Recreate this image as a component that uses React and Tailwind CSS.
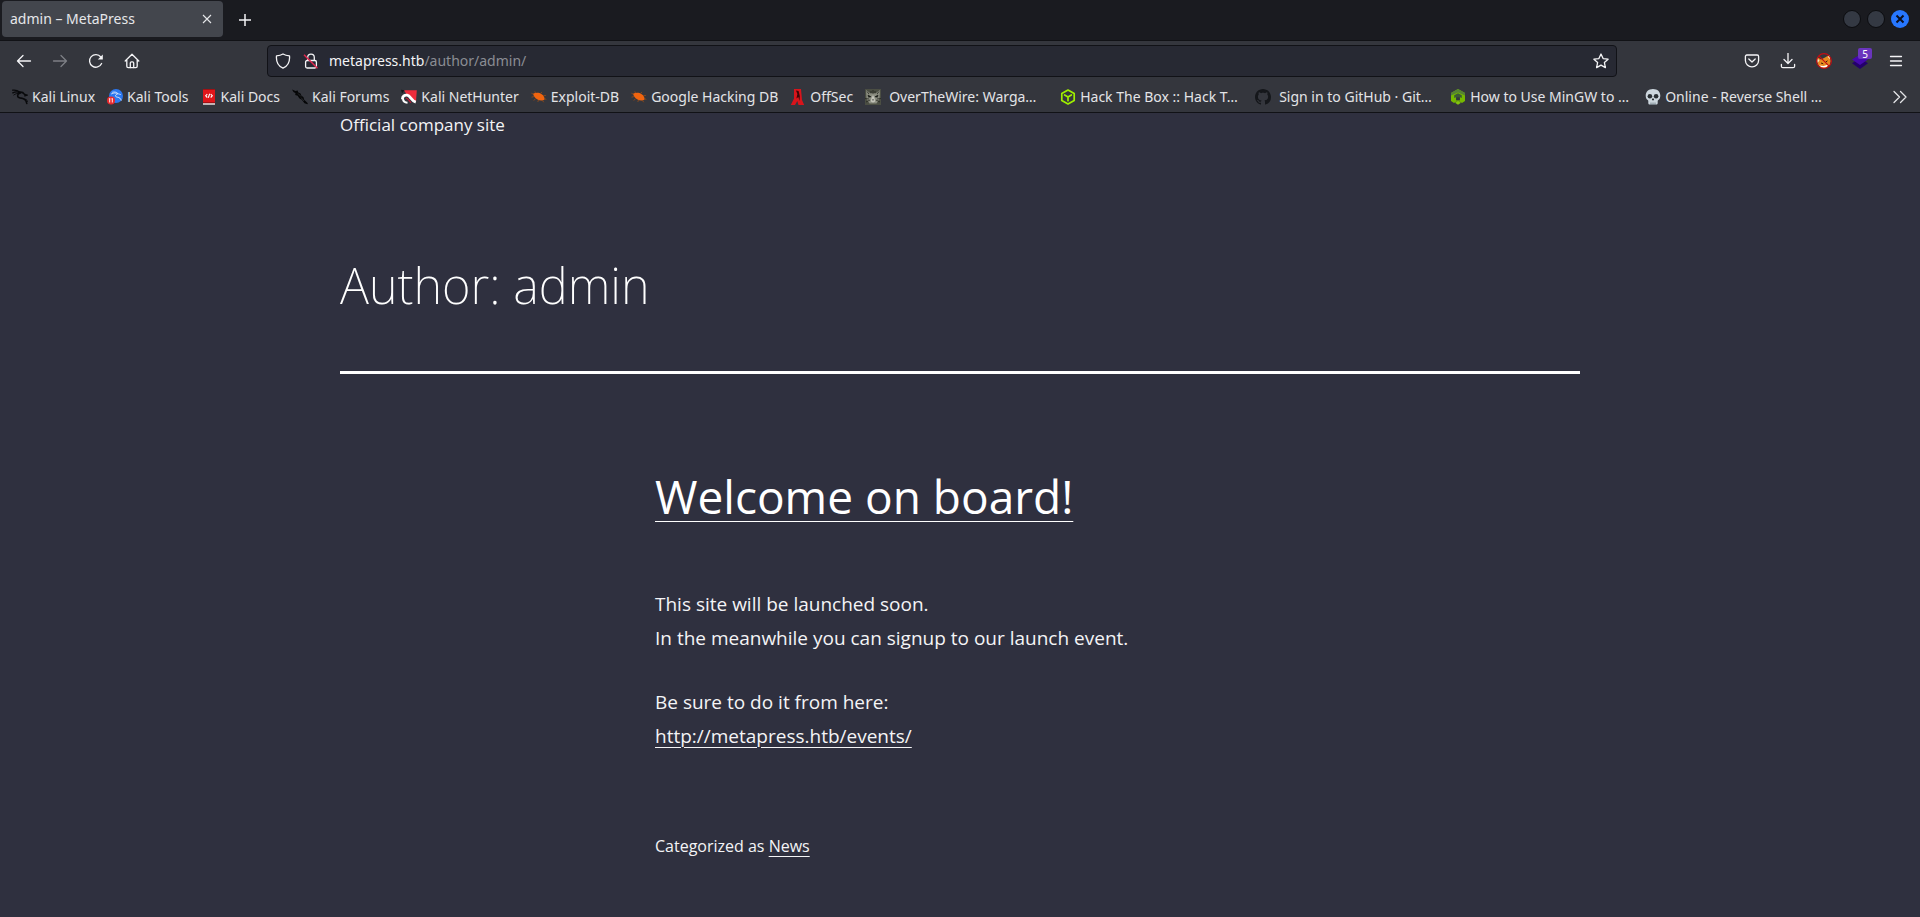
import React from "react";

const UI_FONT = "font-['Noto_Sans','Open_Sans',sans-serif]";

function Stroke({ children, size = 16, className = "" }) {
  return (
    <svg
      width={size}
      height={size}
      viewBox="0 0 16 16"
      fill="none"
      stroke="currentColor"
      strokeWidth="1.3"
      strokeLinecap="round"
      strokeLinejoin="round"
      className={`shrink-0 ${className}`}
      aria-hidden="true"
    >
      {children}
    </svg>
  );
}

function Favicon({ children }) {
  return (
    <svg width="16" height="16" viewBox="0 0 16 16" className="shrink-0" aria-hidden="true">
      {children}
    </svg>
  );
}

const KaliLinuxIcon = () => (
  <Favicon>
    <g fill="none" stroke="#08090b" strokeLinecap="round">
      <path d="M.6 1.2C3 .8 5.500 1.300 7.600 3" strokeWidth="1.2" />
      <path d="M.8 3.900C3 2.600 5.500 2.500 8 3.600" strokeWidth="1.300" />
      <path d="M1.800 6C3.500 4.600 6 4 8.400 4.400" strokeWidth=".9" />
      <path d="M7.500 3.200c2.200-.3 4 .6 4.800 2l2.400.9-1.900.7" strokeWidth="1.500" />
      <path d="M7.600 4.200C5 5.200 4.800 8.300 8 8.900c4 .6 6.200 1.500 6.800 5.600" strokeWidth="1.600" />
      <path d="M12 10c1.800.1 3.200.8 3.600 2.400" strokeWidth="1" />
    </g>
  </Favicon>
);

const KaliToolsIcon = () => (
  <Favicon>
    <circle cx="9" cy="7" r="7" fill="#2b78f0" />
    <g fill="none" stroke="#e8f1ff" strokeLinecap="round">
      <path d="M4.500 4.800c2.200-1.200 4.300-1.200 6.200 0" strokeWidth=".8" />
      <path d="M5.500 3.200c2-.6 4-.3 5.500 1.500l2.500.8" strokeWidth=".7" />
      <path d="M10 5.200c-2.400.9-1.800 2.700.4 3 2 .3 3.300 1.100 3.800 3" strokeWidth=".9" />
    </g>
    <circle cx="4" cy="11.600" r="4" fill="#ea2a2e" />
    <path d="M2.700 9.800v3.700M1.900 9.800h1.400M5.300 9.800v3.700M4.500 9.800h1.400" stroke="#fff" strokeWidth=".9" fill="none" />
  </Favicon>
);

const KaliDocsIcon = () => (
  <Favicon>
    <path d="M2 0h12v14.500H2z" fill="#e0161b" />
    <path d="M2 0h12v1H2zM2 13h12v1H2z" fill="#a11114" />
    <path d="M2 14.200h12V15.800H2z" fill="#ddd5d5" />
    <path d="M6.300 5 4.700 6.800l1.600 1.700M9.700 5l1.600 1.800-1.600 1.700M8.700 4.800 7.300 8.800" stroke="#fff" strokeWidth="1.100" fill="none" />
  </Favicon>
);

const KaliForumsIcon = () => (
  <Favicon>
    <path
      d="M0 .5 3.500 2l2.200-.4.4 1.700 2.400 1.200.8 2 2.200 1.800.7 2.500 3.600 3.500-.3 1-3-1-2.700-3.600-2.600-1.500-1.500-2.400L3.200 6l.3-1.800L1.500 3z"
      fill="#050607"
    />
    <path d="m6 4.500 3 3M9 8.500l3 3.500" stroke="#3a3c42" strokeWidth=".6" />
  </Favicon>
);

const NetHunterIcon = () => (
  <Favicon>
    <path d="M3 1.200H15.800L15 12.500 9 9 5 4.500z" fill="#ee2c3c" />
    <path d="M0 .8 3.500 1.200 1 4.500z" fill="#15161a" />
    <path d="M1.400 10.200C1.400 7.200 3.600 5.800 6.200 6.200c3.400.6 4.300 5.800 8.600 7" fill="none" stroke="#fff" strokeWidth="2.800" />
    <path d="M2 9.500c0 2.500 1.300 4 4.500 4.200" fill="none" stroke="#fff" strokeWidth="2" />
    <path d="M4.800 9.200c1.800.2 3.400 1.800 5 4.600" fill="none" stroke="#c01c36" strokeWidth="1.300" />
  </Favicon>
);

const BugIcon = () => (
  <Favicon>
    <path
      d="M2 4.800C3.500 3.800 5.300 3.500 7.400 3.700c2.400.4 4.600 2 5.600 4 .6 1.300.7 2.500.2 3.400-2.200.8-5 .5-7.200-.8C4.100 9.200 2.700 7.200 2 4.800z"
      fill="#f0640f"
    />
    <path
      d="M4.500 4 3.800 2.400M2.300 5.200.4 4.200M9.500 4.400l1.600-1.300M12.300 6.800l2.600-.4M2.900 7.600.6 8.200M4.400 9.800l-1.600 1.800M7.500 11 6.800 13M13.300 9.600l2 .8M11.300 11.200l1.400 2"
      stroke="#a9500f"
      strokeWidth=".7"
    />
  </Favicon>
);

const OffSecIcon = () => (
  <Favicon>
    <path d="M4 0h7l1 11 2.200 5H8.500L7.300 12 5 16H.8L4 9.500z" fill="#d8141b" />
    <path d="M6 1.500 7.400 5 6.400 9.500 8.400 8l1.100 4 .3-5L8.600 2z" fill="#3b0607" />
  </Favicon>
);

const CatIcon = () => (
  <Favicon>
    <path d="M0 0h16v16H0z" fill="#4b4e43" />
    <path d="M1 1 5 4h6l4-3-.5 9-3 4.500h-7L1.500 10z" fill="#8b8d80" />
    <path d="M2 2.500 4 5M14 2.500 12 5M8 1v4M6 2v2.500M10 2v2.500M0 9.500l4 .5M16 9.500l-4 .5M1 13l4-2M15 13l-4-2" stroke="#24261f" strokeWidth=".8" />
    <path d="M6.500 9 8 6l1.500 3 .8 3.500-2.300 1-2.300-1z" fill="#c3c4b9" />
    <path d="m3 6 3 1.800-2.400.4zM13 6l-3 1.800 2.400.4z" fill="#1a1c17" stroke="#1a1c17" strokeWidth=".6" />
    <path d="M7 10.500h2L8 11.800z" fill="#23241f" />
  </Favicon>
);

const BoxIcon = () => (
  <Favicon>
    <path
      d="M8 1 14.200 4.500v7L8 15l-6.200-3.500v-7zM4.600 5.900 8 7.900l3.400-2M8 7.900v3.800"
      fill="none"
      stroke="#9fef00"
      strokeWidth="1.700"
      strokeLinejoin="round"
      strokeLinecap="round"
    />
  </Favicon>
);

const GitHubIcon = () => (
  <Favicon>
    <path
      fill="#15171b"
      d="M8 0C3.580 0 0 3.580 0 8c0 3.540 2.290 6.530 5.470 7.590.4.070.550-.170.550-.380 0-.190-.010-.820-.010-1.490-2.010.370-2.530-.490-2.690-.940-.090-.230-.480-.940-.820-1.130-.280-.150-.680-.520-.010-.530.630-.010 1.080.580 1.230.820.720 1.210 1.870.870 2.330.660.070-.520.280-.870.510-1.070-1.780-.2-3.640-.890-3.640-3.950 0-.870.310-1.590.820-2.150-.080-.2-.360-1.020.080-2.120 0 0 .670-.210 2.200.820.640-.180 1.320-.270 2-.270s1.360.090 2 .270c1.530-1.040 2.200-.820 2.200-.820.440 1.100.160 1.920.080 2.120.510.560.820 1.270.820 2.150 0 3.070-1.870 3.750-3.650 3.950.290.250.540.730.540 1.480 0 1.070-.010 1.930-.010 2.200 0 .210.150.460.550.380A8.010 8.010 0 0 0 16 8c0-4.420-3.580-8-8-8z"
    />
  </Favicon>
);

const HexIcon = () => (
  <Favicon>
    <path d="M8 0 15 4v8l-3 2-2-1.200H6L4 14l-3-2V4z" fill="#76b900" />
    <path d="M8 0 15 4v2.500L8 3.500 1 6.500V4z" fill="#558233" />
    <path d="M8 4.200 11.800 6.300v2.600L10 8.200v3H6v-3l-1.800.7V6.300z" fill="#3b5a35" />
    <path d="M6.300 8.400h3.400v2.800H6.300z" fill="#34363d" />
    <path d="M5 13.700 8 12l3 1.700L8 15.800z" fill="#83c40f" />
  </Favicon>
);

const SkullIcon = () => (
  <Favicon>
    <path
      d="M8 0c4.500 0 7.300 2.800 7.300 6.600 0 2.200-.6 3.700-2 4.500-.5.300-.6.800-.6 1.500v1.300c0 1-.7 1.700-1.600 1.700H4.900c-.9 0-1.600-.7-1.600-1.700v-1.300c0-.7-.1-1.200-.6-1.500C1.300 10.300.7 8.800.7 6.600.7 2.800 3.500 0 8 0z"
      fill="#ccd6dd"
    />
    <circle cx="4.900" cy="7.300" r="2.300" fill="#292f33" />
    <circle cx="11.100" cy="7.300" r="2.300" fill="#292f33" />
    <path d="M8 9.300c.7 0 1.300 1.500 1 2-.3.300-.6-.2-1-.2s-.7.500-1 .2c-.3-.5.300-2 1-2z" fill="#292f33" />
    <path d="M6 13.500V16M8 13.500V16M10 13.500V16" stroke="#66757f" strokeWidth=".8" />
  </Favicon>
);

const BOOKMARKS = [
  { title: "Kali Linux", Icon: KaliLinuxIcon },
  { title: "Kali Tools", Icon: KaliToolsIcon },
  { title: "Kali Docs", Icon: KaliDocsIcon },
  { title: "Kali Forums", Icon: KaliForumsIcon },
  { title: "Kali NetHunter", Icon: NetHunterIcon },
  { title: "Exploit-DB", Icon: BugIcon },
  { title: "Google Hacking DB", Icon: BugIcon },
  { title: "OffSec", Icon: OffSecIcon },
  { title: "OverTheWire: Warga…", Icon: CatIcon, indented: true, long: true },
  { title: "Hack The Box :: Hack T…", Icon: BoxIcon, long: true },
  { title: "Sign in to GitHub · Git…", Icon: GitHubIcon, indented: true, long: true },
  { title: "How to Use MinGW to …", Icon: HexIcon, long: true },
  { title: "Online - Reverse Shell …", Icon: SkullIcon, long: true },
];

function ToolButton({ label, disabled, children }) {
  return (
    <button
      type="button"
      aria-label={label}
      disabled={disabled}
      className="flex h-8 w-9 shrink-0 items-center justify-center text-[#f4f4f6] disabled:text-[#7d7f85]"
    >
      {children}
    </button>
  );
}

function TabBar() {
  return (
    <div className="flex h-[41px] items-start border-b border-[#111216] bg-[#1a1b20]">
      <div className="ml-[2px] mt-px flex h-9 w-[221px] items-center justify-between rounded-[4px] bg-[#43464d] pl-2 pr-[10px]">
        <span className="text-[#e6e7ea]">admin – MetaPress</span>
        <button type="button" aria-label="Close tab" className="text-[#e6e7ea]">
          <svg width="12" height="12" viewBox="0 0 12 12" stroke="currentColor" strokeWidth="1.100" aria-hidden="true">
            <path d="m2 2 8 8M10 2 2 10" />
          </svg>
        </button>
      </div>
      <button type="button" aria-label="New tab" className="ml-[14px] mt-1 flex h-8 w-4 items-center justify-center text-[#f4f4f6]">
        <svg width="14" height="14" viewBox="0 0 14 14" stroke="currentColor" strokeWidth="1.500" aria-hidden="true">
          <path d="M7 1v12M1 7h12" />
        </svg>
      </button>
      <div className="ml-auto mr-[11px] mt-[10px] flex gap-[6px]">
        <button type="button" aria-label="Minimize" className="h-[18px] w-[18px] rounded-full border border-[#0b0c0f] bg-[#343943]" />
        <button type="button" aria-label="Maximize" className="h-[18px] w-[18px] rounded-full border border-[#0b0c0f] bg-[#343943]" />
        <button type="button" aria-label="Close" className="flex h-[18px] w-[18px] items-center justify-center rounded-full bg-[#2777ff]">
          <svg width="10" height="10" viewBox="0 0 10 10" stroke="#0b1020" strokeWidth="2" aria-hidden="true">
            <path d="m1.500 1.500 7 7M8.500 1.500l-7 7" />
          </svg>
        </button>
      </div>
    </div>
  );
}

function NavBar() {
  return (
    <div className="flex h-10 items-center px-[6px]">
      <ToolButton label="Back">
        <Stroke><path d="M14.500 8H1.500M7 2.500 1.500 8 7 13.500" /></Stroke>
      </ToolButton>
      <ToolButton label="Forward" disabled>
        <Stroke><path d="M1.500 8h13M9 2.500 14.500 8 9 13.500" /></Stroke>
      </ToolButton>
      <ToolButton label="Reload">
        <Stroke>
          <path d="M13.600 10.500A6.300 6.300 0 1 1 12.800 4" />
          <path d="M14.800 1.500v5h-5z" fill="currentColor" stroke="none" />
        </Stroke>
      </ToolButton>
      <ToolButton label="Home">
        <Stroke>
          <path d="M1.200 8 8 1.300 14.800 8M2.800 7v6.300c0 .9.600 1.400 1.400 1.400h7.600c.8 0 1.400-.5 1.400-1.400V7" />
          <path d="M6.300 14.500V10c0-.7.5-1.200 1.200-1.200h1c.7 0 1.200.5 1.200 1.200v4.500" />
        </Stroke>
      </ToolButton>
      <div className="w-[117px] shrink-0" />
      <div className="flex h-8 min-w-0 flex-1 items-center rounded-[4px] border border-[#111217] bg-[#272933] px-[7px] text-[#f4f4f6]">
        <Stroke>
          <path d="M8 1c2 1.200 4.200 1.700 6.500 1.900.5 5.400-1.500 10-6.500 12.200C3 12.900 1 8.300 1.500 2.900 3.800 2.700 6 2.200 8 1z" />
        </Stroke>
        <svg width="16" height="16" viewBox="0 0 16 16" fill="none" className="ml-3 shrink-0" aria-hidden="true">
          <rect x="2.600" y="7.500" width="10.800" height="7.500" rx="1.500" stroke="#f4f4f6" strokeWidth="1.300" />
          <path d="M4.700 7.300V4.500a3.300 3.300 0 0 1 6.600 0v2.800" stroke="#f4f4f6" strokeWidth="1.300" />
          <path d="m1 1.800 13.500 13.400" stroke="#e22850" strokeWidth="1.500" />
        </svg>
        <div role="textbox" aria-label="Address" className="ml-[10px] flex-1 truncate">
          metapress.htb<span className="text-[#8b8d94]">/author/admin/</span>
        </div>
        <button type="button" aria-label="Bookmark this page">
          <Stroke>
            <path d="m8 1 2.100 4.600 5 .6-3.700 3.400 1 5L8 12.100l-4.400 2.500 1-5L.9 6.200l5-.6z" />
          </Stroke>
        </button>
      </div>
      <div className="w-[117px] shrink-0" />
      <ToolButton label="Save to Pocket">
        <Stroke>
          <path d="M2.800 2h10.400c.8 0 1.400.6 1.400 1.400v4A6.500 6.500 0 0 1 8 13.800 6.500 6.500 0 0 1 1.400 7.400v-4C1.400 2.600 2 2 2.800 2zM4.800 6 8 9l3.200-3" />
        </Stroke>
      </ToolButton>
      <ToolButton label="Downloads">
        <Stroke>
          <path d="M8 .2v10.200M4 6.500l4 4 4-4M1.400 11.500v1.700c0 .9.600 1.500 1.500 1.500h10.200c.9 0 1.500-.6 1.500-1.500v-1.700" />
        </Stroke>
      </ToolButton>
      <ToolButton label="FoxyProxy">
        <svg width="16" height="16" viewBox="0 0 16 16" aria-hidden="true">
          <path d="M1 4 5 6.500 9 4.500 13.200 2l1.500 6-1 4-3.700 3H5.500L2 11.500z" fill="#e8891f" />
          <path d="m1.200 5 2.300 2.500L1.500 10zM11.800 4l1.600-1.800.8 4z" fill="#f7e5c8" />
          <path d="M3 12.400 7.500 13l5-1.600-2.500 3.200H5.500z" fill="#fff" />
          <path d="m5 10 2.200.8M9.500 9.200l2-1.400" stroke="#40200a" strokeWidth="1" />
          <circle cx="8" cy="8" r="7.400" fill="none" stroke="#c40d12" strokeWidth="1.100" />
          <path d="m2.800 2.800 10.400 10.400" stroke="#c40d12" strokeWidth="1.100" />
        </svg>
      </ToolButton>
      <ToolButton label="Wappalyzer, 5 technologies">
        <span className="relative flex h-4 w-4">
          <svg width="16" height="16" viewBox="0 0 16 16" aria-hidden="true">
            <path d="M0 10.300 8 5l8 5.300L8 16z" fill="#24006b" />
            <path d="M0 6.500 8 1.500l8 5L8 12z" fill="#4608ad" />
          </svg>
          <span className="absolute -right-1 -top-[5px] flex h-[11px] w-[14px] items-center justify-center rounded-[2px] bg-[#6a35bd] text-[10px] leading-none text-white">
            5
          </span>
        </span>
      </ToolButton>
      <ToolButton label="Open application menu">
        <Stroke><path d="M2.500 3.500h11M2.500 8h11M2.500 12.500h11" /></Stroke>
      </ToolButton>
    </div>
  );
}

function BookmarksBar() {
  return (
    <nav aria-label="Bookmarks" className="flex h-8 items-center border-b border-[#111216] px-3">
      <ul className="flex items-center gap-3">
        {BOOKMARKS.map(({ title, Icon, indented, long }) => (
          <li key={title} className={long ? "w-[183px]" : ""}>
            <a href="#" className={`flex items-center whitespace-nowrap ${indented ? "gap-2" : "gap-1"}`}>
              <Icon />
              {title}
            </a>
          </li>
        ))}
      </ul>
      <button type="button" aria-label="Show more bookmarks" className="ml-auto">
        <Stroke><path d="m2 2.500 5.500 5.500L2 13.500M8.500 2.500 14 8l-5.500 5.500" /></Stroke>
      </button>
    </nav>
  );
}

export default function App() {
  return (
    <div className={`min-h-screen bg-[#2f303f] ${UI_FONT}`}>
      <header className="bg-[#34363d] text-sm leading-5 text-[#e3e4e7]">
        <TabBar />
        <NavBar />
        <BookmarksBar />
      </header>
      <main className="mx-auto max-w-[1240px] font-['Open_Sans','Noto_Sans',sans-serif] text-[#f4f4f6]">
        <p className="text-[17px] leading-6">Official company site</p>
        <h1 className="mt-[116px] border-b-[3px] border-white pb-[54px] font-['Noto_Sans','Open_Sans',sans-serif] text-[49px] font-extralight leading-[64px] text-white">
          Author: admin
        </h1>
        <article className="mx-auto mt-[90px] max-w-[610px]">
          <h2 className="text-[46px] font-normal leading-[64px] text-white">
            <a href="#" className="underline decoration-1 underline-offset-[7px]">Welcome on board!</a>
          </h2>
          <div className="mt-[59px] text-[19px] leading-[34px]">
            <p>
              This site will be launched soon.
              <br />
              In the meanwhile you can signup to our launch event.
            </p>
            <p className="mt-[30px]">
              Be sure to do it from here:
              <br />
              <a href="#" className="underline decoration-1 underline-offset-4">http://metapress.htb/events/</a>
            </p>
          </div>
          <footer className="mt-20 pb-12 text-base leading-[26px]">
            Categorized as{" "}
            <a href="#" className="underline decoration-1 underline-offset-4">News</a>
          </footer>
        </article>
      </main>
    </div>
  );
}
